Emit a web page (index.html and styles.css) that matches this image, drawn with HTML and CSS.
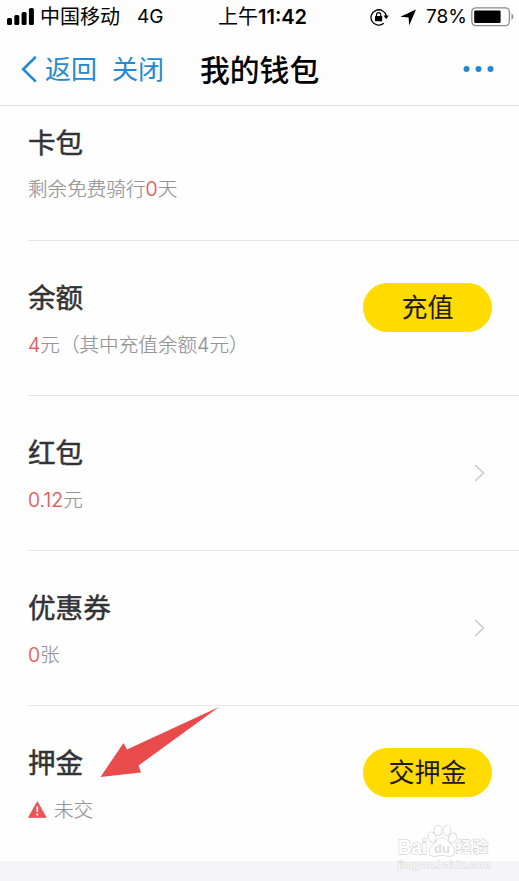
FILE: index.html
```html
<!DOCTYPE html>
<html lang="zh-CN">
	<head>
		<meta charset="UTF-8">
		<title>我的钱包</title>
		<link rel="stylesheet" href="styles.css">
	</head>
	<body>
		<div class="status">
			<svg class="signal" width="28" height="18" viewBox="0 0 28 18">
				<rect x="0" y="11" width="5" height="7" rx="1.6"/>
				<rect x="7.3" y="8" width="5" height="10" rx="1.6"/>
				<rect x="14.6" y="5" width="5" height="13" rx="1.6"/>
				<rect x="21.9" y="1" width="5" height="17" rx="1.6"/>
			</svg>
			<span class="carrier">中国移动</span>
			<span class="network">4G</span>
			<span class="time">上午<b>11:42</b></span>
			<svg class="lock" width="20" height="18" viewBox="0 0 20 18">
				<path d="M13.8 15.3A7.7 7.7 0 1 1 16.3 8" fill="none" stroke="#000" stroke-width="1.3"/>
				<path d="M13.5 7.5h5.2l-2.500 3.700z"/>
				<rect x="5" y="8" width="7.2" height="5.3" rx=".6"/>
				<path d="M6.5 8.3V6.7a2.1 2.1 0 0 1 4.2 0v1.6" fill="none" stroke="#000" stroke-width="1.2"/>
			</svg>
			<svg class="locate" width="17" height="17" viewBox="0 0 17 17"><path d="M16 .5 9.2 16.5 8.6 8.6.3 7.8z"/></svg>
			<span class="percent">78%</span>
			<svg class="battery" width="44" height="20" viewBox="0 0 44 20">
				<rect x=".8" y=".8" width="37.6" height="17.8" rx="4" fill="none" stroke="#8c8c8c" stroke-width="1.3"/>
				<rect x="3.2" y="3.4" width="26.4" height="12.6" rx="1.2"/>
				<path d="M40.5 6.6c2.4 1 2.4 5.2 0 6.2z" fill="#8c8c8c"/>
			</svg>
		</div>
		<div class="nav">
			<svg class="back" width="16" height="27" viewBox="0 0 16 27"><path d="M14.8.8 2.2 13.2 14.8 25.6"/></svg>
			<a class="link">返回</a>
			<a class="link close">关闭</a>
			<h1>我的钱包</h1>
			<svg class="more" width="32" height="8" viewBox="0 0 32 8">
				<circle cx="4.5" cy="4" r="3"/><circle cx="16.5" cy="4" r="3"/><circle cx="28.5" cy="4" r="3"/>
			</svg>
		</div>
		<ul class="list">
			<li class="first">
				<div class="info"><h2>卡包</h2><p>剩余免费骑行<em>0</em>天</p></div>
			</li>
			<li>
				<div class="info"><h2>余额</h2><p><em>4</em>元（其中充值余额4元）</p></div>
				<a class="btn">充值</a>
			</li>
			<li>
				<div class="info"><h2>红包</h2><p><em>0.12</em>元</p></div>
				<svg class="arrow" width="11" height="18" viewBox="0 0 11 18"><path d="M1 1l8.5 8L1 17"/></svg>
			</li>
			<li>
				<div class="info"><h2>优惠券</h2><p><em>0</em>张</p></div>
				<svg class="arrow" width="11" height="18" viewBox="0 0 11 18"><path d="M1 1l8.5 8L1 17"/></svg>
			</li>
			<li class="last">
				<div class="info">
					<h2>押金</h2>
					<p>
						<svg class="warn" width="19" height="17" viewBox="0 0 19 17">
							<path d="M9.3.8 18 16.3H.6z" fill="#ef5358" stroke="#ef5358" stroke-linejoin="round"/>
							<path d="M9.3 5.5v5.6M9.3 12.6v1.9" stroke="#fff" stroke-width="1.7"/>
						</svg>未交
					</p>
				</div>
				<a class="btn">交押金</a>
			</li>
		</ul>
		<!-- 指向押金的箭头 -->
		<svg class="pointer" width="122" height="74" viewBox="0 0 122 74"><path d="M119 1 27 43.5 23.5 37 .5 71 41 66.5 38.5 59.5z"/></svg>
		<!-- 水印 -->
		<svg class="mark" width="104" height="50" viewBox="0 0 104 50">
			<text x="1" y="31" class="brand" textLength="29" lengthAdjust="spacingAndGlyphs">Bai</text>
			<ellipse cx="35" cy="14" rx="3.6" ry="4.8" transform="rotate(-20 35 14)"/>
			<ellipse cx="41" cy="7.5" rx="3.6" ry="5"/>
			<ellipse cx="50" cy="7.5" rx="3.6" ry="5" transform="rotate(10 50 7.5)"/>
			<ellipse cx="55.5" cy="15" rx="3.6" ry="4.8" transform="rotate(20 55.5 15)"/>
			<path d="M45 15c5 0 7 5 10 8 4 4 3 10-2 10-3 0-5-1-8-1s-5 1-8 1c-5 0-6-6-2-10 4-3 5-8 10-8z"/>
			<text x="37" y="30" class="du" textLength="16">du</text>
			<text x="59" y="29" class="cn" textLength="32">经验</text>
			<text x="1" y="45" class="url" textLength="92" lengthAdjust="spacingAndGlyphs">jingyan.baidu.com</text>
		</svg>
	</body>
</html>
```
FILE: styles.css
```css
*{padding: 0;margin: 0;box-sizing: border-box;}
body{
	position: relative;
	height: 881px;
	overflow: hidden;
	background: #f5f4f8;
	font-family: Inter, "Noto Sans CJK SC", sans-serif;
	color: #000;
}
svg{display: block;flex: none;}
.status{
	display: flex;
	align-items: center;
	height: 34px;
	padding-left: 7px;
	background: #fdfdfd;
	font-size: 20px;
	line-height: 34px;
	white-space: nowrap;
}
.signal{margin-top: -2px;}
.carrier{width: 97px;padding-left: 5px;}
.network{width: 86px;padding-left: 5px;font-size: 19px;}
.time{width: 153px;}
.time b{font-size: 20px;font-weight: 600;}
.lock{margin-left: -1px;}
.locate{margin-left: 10px;}
.percent{width: 44px;margin-left: 9px;font-size: 19px;}
.battery{margin-left: 1px;}
.nav{
	display: flex;
	align-items: center;
	height: 72px;
	padding-left: 21px;
	border-bottom: 1px solid #dcdcde;
	background: #fdfdfd;
	line-height: 71px;
	white-space: nowrap;
}
.back path{fill: none;stroke: #2488d2;stroke-width: 2.6;}
.link{width: 67px;padding-left: 8px;font-size: 26px;color: #2488d2;}
.close{width: 96px;}
.nav h1{width: 262px;padding-top: 1px;font-size: 29.8px;font-weight: 500;}
.more{margin-top: -2px;fill: #2488d2;}
.list{
	list-style: none;
	height: 755px;
	padding-left: 28px;
	background: #fefefe;
}
.list li{
	display: flex;
	justify-content: space-between;
	height: 155px;
	padding-top: 37px;
	border-bottom: 1px solid #e6e6e8;
}
.list .first{height: 135px;padding-top: 17px;}
.list .last{border-bottom: 0;}
.info h2{
	font-size: 27.6px;
	font-weight: 400;
	-webkit-text-stroke: .5px #333336;
	line-height: 40px;
	color: #333336;
}
.info p{
	display: flex;
	margin-top: 12px;
	font-size: 19.6px;
	font-weight: 300;
	-webkit-text-stroke: .2px;
	line-height: 30px;
	color: #949496;
}
.first .info p{margin-top: 11px;}
.info em{font-style: normal;color: #e4575b;}
.warn{margin: 6px 7px 0 0;}
.btn{
	width: 129px;
	height: 49px;
	margin: 5px 27px 0 0;
	border-radius: 25px;
	background: #ffdb00;
	font-size: 26px;
	line-height: 49px;
	text-align: center;
	color: #201a10;
}
.arrow{margin: 31px 34px 0 0;}
.arrow path{fill: none;stroke: #c8c8ca;stroke-width: 1.5;}
.pointer{
	position: absolute;
	left: 100px;top: 706px;
	overflow: visible;
}
.pointer path{fill: #e94a4b;}
.mark{
	position: absolute;
	left: 397px;top: 823px;
	overflow: visible;
	fill: #fff;
	stroke: #d6d6d8;
	stroke-width: 1.4;
	paint-order: stroke;
}
.brand{font: bold 20px "Liberation Sans", sans-serif;}
.du{font: bold 13px "Liberation Sans", sans-serif;fill: #dededf;stroke: none;}
.cn{font: bold 15px "Noto Sans CJK SC", sans-serif;}
.url{font: 9.5px "Liberation Sans", sans-serif;stroke-width: .9;}
```
